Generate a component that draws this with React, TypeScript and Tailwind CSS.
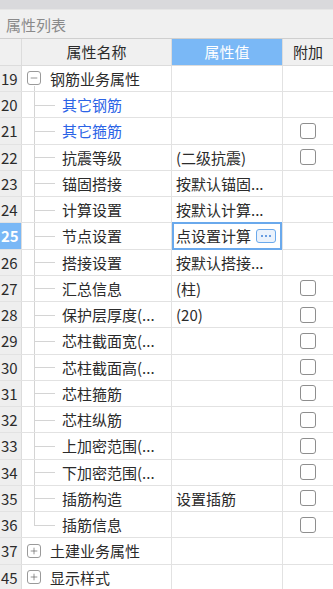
import { Minus, Plus } from "lucide-react";

type Row = {
  no: number;
  name: string;
  value?: string;
  kind: "group" | "child";
  open?: boolean;
  blue?: boolean;
  check?: boolean;
  last?: boolean;
  selected?: boolean;
};

const rows: Row[] = [
  { no: 19, name: "钢筋业务属性", kind: "group", open: true },
  { no: 20, name: "其它钢筋", kind: "child", blue: true },
  { no: 21, name: "其它箍筋", kind: "child", blue: true, check: true },
  { no: 22, name: "抗震等级", value: "(二级抗震)", kind: "child", check: true },
  { no: 23, name: "锚固搭接", value: "按默认锚固...", kind: "child" },
  { no: 24, name: "计算设置", value: "按默认计算...", kind: "child" },
  { no: 25, name: "节点设置", value: "点设置计算", kind: "child", selected: true },
  { no: 26, name: "搭接设置", value: "按默认搭接...", kind: "child" },
  { no: 27, name: "汇总信息", value: "(柱)", kind: "child", check: true },
  { no: 28, name: "保护层厚度(...", value: "(20)", kind: "child", check: true },
  { no: 29, name: "芯柱截面宽(...", kind: "child", check: true },
  { no: 30, name: "芯柱截面高(...", kind: "child", check: true },
  { no: 31, name: "芯柱箍筋", kind: "child", check: true },
  { no: 32, name: "芯柱纵筋", kind: "child", check: true },
  { no: 33, name: "上加密范围(...", kind: "child", check: true },
  { no: 34, name: "下加密范围(...", kind: "child", check: true },
  { no: 35, name: "插筋构造", value: "设置插筋", kind: "child", check: true },
  { no: 36, name: "插筋信息", kind: "child", check: true, last: true },
  { no: 37, name: "土建业务属性", kind: "group" },
  { no: 45, name: "显示样式", kind: "group" },
];

function NameCell({ row }: { row: Row }) {
  if (row.kind === "group") {
    return (
      <div className="relative flex h-full items-center pl-[5px]">
        {row.open && <span className="absolute bottom-0 left-[12px] h-[5px] w-px bg-[#d4d4d4]" />}
        <span className="flex h-[14px] w-[14px] items-center justify-center rounded-[3px] border border-[#9a9a9a] bg-white text-[#555]">
          {row.open ? <Minus className="h-[10px] w-[10px]" strokeWidth={1.5} /> : <Plus className="h-[10px] w-[10px]" strokeWidth={1.5} />}
        </span>
        <span className="ml-[9px] text-[#2b2b2b]">{row.name}</span>
      </div>
    );
  }
  return (
    <div className="relative flex h-full items-center">
      <span className={`absolute left-[12px] top-0 w-px bg-[#d4d4d4] ${row.last ? "h-1/2" : "h-full"}`} />
      <span className="absolute left-[12px] top-1/2 h-px w-[21px] bg-[#d4d4d4]" />
      <span className={`ml-[40px] ${row.blue ? "text-[#2b63e6]" : "text-[#2b2b2b]"}`}>{row.name}</span>
    </div>
  );
}

export default function App() {
  return (
    <div className="h-[589px] w-[333px] overflow-hidden bg-white text-[15px] leading-none" style={{ fontFamily: '"Noto Sans CJK SC", "Noto Sans", sans-serif' }}>
      <div className="h-[10px] border-b border-[#e6e6e6] bg-[#d9d9dc]" />
      <div className="flex h-[29px] items-center border-b border-[#cfcfcf] bg-[#f0f0f0] pl-[6px] text-[#8a8a8a]">属性列表</div>
      <div className="flex h-[26.75px] border-b border-[#dcdcdc] bg-[#f0f0f0] text-[#2b2b2b]">
        <div className="w-[22px] border-r border-[#dcdcdc]" />
        <div className="flex w-[150px] items-center justify-center border-r border-[#dcdcdc]">属性名称</div>
        <div className="flex w-[110px] items-center justify-center bg-[#7ab8f6] text-white">属性值</div>
        <div className="flex flex-1 items-center justify-center border-l border-[#dcdcdc]">附加</div>
      </div>
      {rows.map((row) => (
        <div key={row.no} className="flex h-[26.25px] border-b border-[#e2e2e2]">
          <div
            className={`flex w-[22px] items-center pl-[1px] border-r border-[#dcdcdc] ${
              row.selected ? "bg-[#7ab8f6] font-bold text-white" : "bg-[#eeeeee] text-[#2b2b2b]"
            }`}
          >
            {row.no}
          </div>
          <div className="w-[150px] border-r border-[#e2e2e2]">
            <NameCell row={row} />
          </div>
          {row.selected ? (
            <div className="-my-px flex w-[110px] items-center border-2 border-[#6aa9ec] pl-[2px] text-[#2b2b2b]">
              <span>{row.value}</span>
              <span className="ml-[5px] flex h-[14px] w-[20px] items-center justify-center gap-[2px] rounded-[3px] border border-[#6aa9ec] bg-[#eaf2fc]">
                <span className="h-[2px] w-[2px] rounded-full bg-[#3b7fd8]" />
                <span className="h-[2px] w-[2px] rounded-full bg-[#3b7fd8]" />
                <span className="h-[2px] w-[2px] rounded-full bg-[#3b7fd8]" />
              </span>
            </div>
          ) : (
            <div className="flex w-[110px] items-center pl-[4px] text-[#2b2b2b]">{row.value}</div>
          )}
          <div className="flex flex-1 items-center justify-center border-l border-[#e2e2e2]">
            {row.check && <span className="h-[16px] w-[16px] rounded-[3px] border border-[#8e8e8e] bg-white" />}
          </div>
        </div>
      ))}
    </div>
  );
}
